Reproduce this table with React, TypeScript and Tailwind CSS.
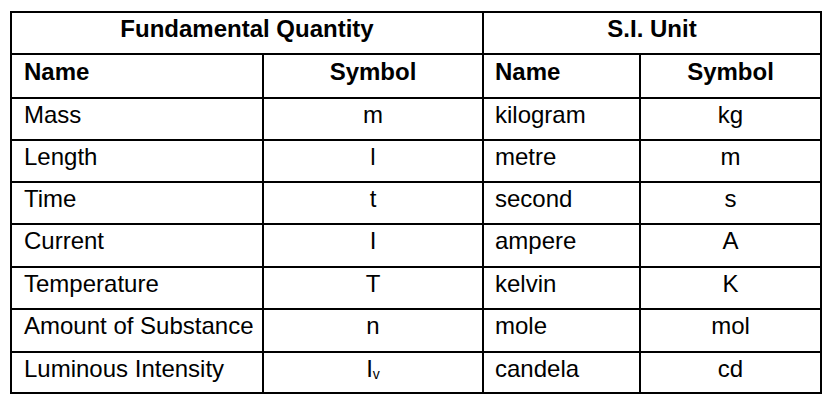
import React from "react";

const rows: [React.ReactNode, React.ReactNode, string, string][] = [
  ["Mass", "m", "kilogram", "kg"],
  ["Length", "l", "metre", "m"],
  ["Time", "t", "second", "s"],
  ["Current", "I", "ampere", "A"],
  ["Temperature", "T", "kelvin", "K"],
  ["Amount of Substance", "n", "mole", "mol"],
  [
    "Luminous Intensity",
    <span key="iv">
      I<span className="text-[14px] relative top-[2px]">v</span>
    </span>,
    "candela",
    "cd",
  ],
];

const heights = ["h-[42px]", "h-[42px]", "h-[42px]", "h-[43px]", "h-[42px]", "h-[43px]", "h-[41px]"];

export default function App() {
  return (
    <div className="w-[828px] h-[403px] bg-white pt-[11px] pl-[10px] text-black text-[24px] leading-[26px] [font-family:'Liberation_Sans',Arial,sans-serif]">
      <div className="grid w-[812px] grid-cols-[252px_220px_157px_181px] border-l-2 border-t-2 border-black">
        <div className="col-span-2 h-[42px] border-r-2 border-b-2 border-black pt-[3px] text-center font-bold">
          Fundamental Quantity
        </div>
        <div className="col-span-2 h-[42px] border-r-2 border-b-2 border-black pt-[3px] text-center font-bold">
          S.I. Unit
        </div>
        <div className="h-[44px] border-r-2 border-b-2 border-black pt-[4px] pl-[12px] font-bold">Name</div>
        <div className="h-[44px] border-r-2 border-b-2 border-black pt-[4px] text-center font-bold">Symbol</div>
        <div className="h-[44px] border-r-2 border-b-2 border-black pt-[4px] pl-[11px] font-bold">Name</div>
        <div className="h-[44px] border-r-2 border-b-2 border-black pt-[4px] text-center font-bold">Symbol</div>
        {rows.map((r, i) => (
          <React.Fragment key={i}>
            <div className={`${heights[i]} border-r-2 border-b-2 border-black pt-[3px] pl-[12px]`}>{r[0]}</div>
            <div className={`${heights[i]} border-r-2 border-b-2 border-black pt-[3px] text-center`}>{r[1]}</div>
            <div className={`${heights[i]} border-r-2 border-b-2 border-black pt-[3px] pl-[11px]`}>{r[2]}</div>
            <div className={`${heights[i]} border-r-2 border-b-2 border-black pt-[3px] text-center`}>{r[3]}</div>
          </React.Fragment>
        ))}
      </div>
    </div>
  );
}
